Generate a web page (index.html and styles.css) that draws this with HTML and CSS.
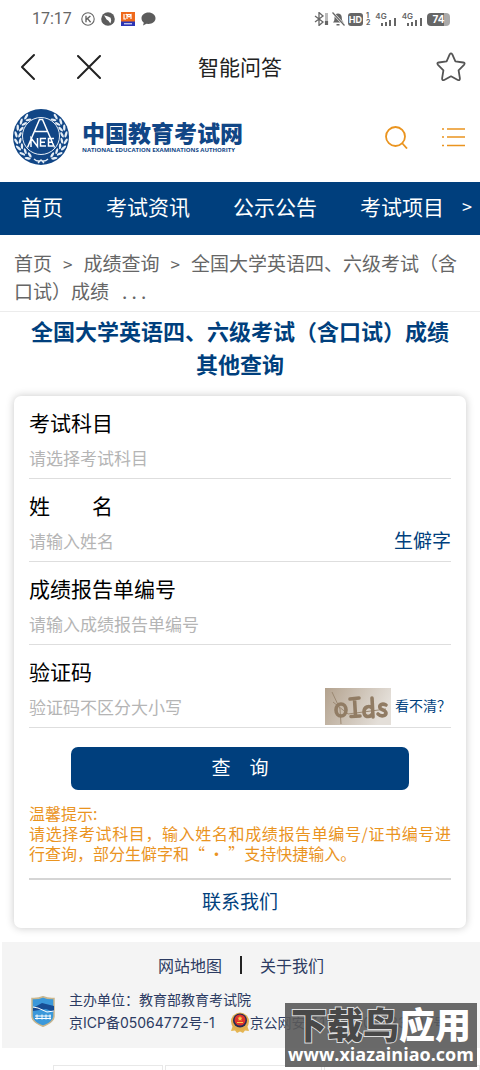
FILE: index.html
```html
<!DOCTYPE html>
<html lang="zh-CN">
<head>
<meta charset="utf-8">
<meta name="viewport" content="width=device-width, initial-scale=1">
<title>智能问答</title>
<link rel="stylesheet" href="styles.css">
</head>
<body>
<div class="status">
  <span class="clock">17:17</span>
  <svg width="14" height="14" viewBox="0 0 14 14" fill="none" stroke="#666" stroke-width="1.1"><circle cx="7" cy="7" r="6.2"/><path d="M5 3.8v6.4M9.4 4 5.4 7.4M6.6 6.6l3 3.6" stroke-width="1.4"/></svg>
  <svg width="14" height="14" viewBox="0 0 14 14"><circle cx="7" cy="7" r="6.8" fill="#5c5c5c"/><path d="M3 3.2 7 4.6l2.6 1.2.6 2.6-.8 3-2-2.6-1.8-1.2Z" fill="#fff"/></svg>
  <svg width="14" height="14" viewBox="0 0 14 14"><path fill="#ef6a1c" d="M0 0h14v10H0z"/><path fill="#2c35b5" d="M0 9.5h14V14H0z"/><path d="M3 2v5h2M6 7V3l2 2 2-2v4M4.500 2.500h6" fill="none" stroke="#fff" stroke-width="1.2"/><path d="M3 11.800h8" stroke="#fff"/></svg>
  <svg width="15" height="14" viewBox="0 0 15 14"><path d="M7.500.5c4 0 7 2.500 7 5.800s-3 5.700-7 5.700l-2-.2L2 13.500l.8-2.700C1.300 9.700.5 8.200.5 6.300.5 3 3.500.5 7.500.5Z" fill="#5c5c5c"/></svg>
  <div class="status-right">
    <svg width="15" height="14" viewBox="0 0 15 14" fill="none" stroke="#666" stroke-width="1.3"><path d="m1 4 8 6-4 3.500V.500L9 4l-8 6"/><path d="M12.500 1v8" stroke="#bbb" stroke-width="3"/><path d="M12.500 9v4" stroke-width="3.200"/></svg>
    <svg width="13" height="14" viewBox="0 0 13 14"><path d="M1 10.500c1.500-1.500 1.500-3 1.500-5C2.500 3 4 1.500 6 1.500S9.800 3 9.800 5.500c0 2 .3 3.500 2 5ZM4.500 12h3v1.500h-3Z" fill="#666"/><path d="m.5.5 12 13" stroke="#fff" stroke-width="2.400"/><path d="m.5.5 12 13" stroke="#666" stroke-width="1.200"/></svg>
    <span class="hd">HD</span><span class="sim"><span>1</span><span>2</span></span>
    <span class="net">4G</span>
    <svg class="bars" width="16" height="8" viewBox="0 0 16 8" fill="#666"><path d="M0 5h2v3H0zM4 4h2v4H4zM8 2h2v6H8zM13 0h2v8h-2z"/></svg>
    <span class="net">4G</span>
    <svg class="bars" width="16" height="8" viewBox="0 0 16 8" fill="#666"><path d="M0 5h2v3H0zM4 4h2v4H4zM8 2h2v6H8zM13 0h2v8h-2z"/></svg>
    <span class="battery">74</span>
  </div>
</div>

<header class="titlebar">
  <div class="side">
    <button class="icon-btn" aria-label="返回"><svg width="17" height="28" viewBox="0 0 17 28" fill="none" stroke="#222" stroke-width="2" stroke-linecap="round" stroke-linejoin="round"><path d="M14 2 2 14l12 12"/></svg></button>
    <button class="icon-btn" aria-label="关闭"><svg width="24" height="24" viewBox="0 0 24 24" fill="none" stroke="#222" stroke-width="2" stroke-linecap="round"><path d="m1 1 22 22M23 1 1 23"/></svg></button>
  </div>
  <h1>智能问答</h1>
  <div class="side end">
    <button class="icon-btn" aria-label="收藏"><svg width="30" height="30" viewBox="0 0 30 30" fill="none" stroke="#555" stroke-width="1.800" stroke-linejoin="round"><path d="M13.800 2.200Q15 .5 16.200 2.200L19.400 9.300 27.300 10.500Q29.600 11 28 12.800L22.600 18.300 23.900 26.400Q24 28.800 21.800 28L15 24.300 8.200 28Q6 28.800 6.100 26.400L7.400 18.300 2 12.800Q.4 11 2.700 10.500L10.600 9.300Z"/></svg></button>
  </div>
</header>

<div class="brand">
  <a class="logo" href="#">
    <svg width="56" height="56" viewBox="0 0 56 56" fill="none">
      <defs>
        <g id="leaf" fill="#e6eef6"><ellipse cx="28" cy="2.900" rx="3.200" ry="1.200" transform="rotate(22 28 2.900)"/><ellipse cx="28" cy="6.800" rx="3" ry="1.200" transform="rotate(-24 28 6.800)"/></g>
        <g id="branch"><use href="#leaf" transform="rotate(36 28 28)"/><use href="#leaf" transform="rotate(52 28 28)"/><use href="#leaf" transform="rotate(68 28 28)"/><use href="#leaf" transform="rotate(84 28 28)"/><use href="#leaf" transform="rotate(100 28 28)"/><use href="#leaf" transform="rotate(116 28 28)"/><use href="#leaf" transform="rotate(132 28 28)"/><use href="#leaf" transform="rotate(148 28 28)"/></g>
      </defs>
      <circle cx="28" cy="28" r="28" fill="#114686"/>
      <use href="#branch"/>
      <use href="#branch" transform="matrix(-1 0 0 1 56 0)"/>
      <circle cx="28" cy="27" r="18.500" stroke="#e6eef6"/>
      <path d="M14.500 38.500 26.500 10.500h3L41.500 38.500M22 22.500h12M18 38V29l6.500 8.500V29M33 29.500h-5.500V37H33M27.500 33.200H32M41 29.500h-5.500V37H40M35.500 33.200H40" stroke="#fff" stroke-width="1.500"/>
      <path d="M21 50q4 3.500 7 1 3 2.500 7-1M25 54l3-3 3 3" stroke="#e6eef6" stroke-width="1.400"/>
    </svg>
    <span class="logo-text"><strong>中国教育考试网</strong><small>NATIONAL EDUCATION EXAMINATIONS AUTHORITY</small></span>
  </a>
  <div class="tools">
    <button class="icon-btn" aria-label="搜索"><svg width="23" height="23" viewBox="0 0 23 23" fill="none" stroke="#ea941f" stroke-width="1.800"><circle cx="10.500" cy="10.500" r="9.500"/><path d="m17 17 5 5.500"/></svg></button>
    <button class="icon-btn" aria-label="菜单"><svg width="23" height="20" viewBox="0 0 23 20" stroke="#ea941f" stroke-width="1.500"><path d="M0 2h2M5 2h18M0 10h2M5 10h18M0 18.500h2M5 18.500h18"/></svg></button>
  </div>
</div>

<nav class="nav">
  <a href="#">首页</a><a href="#">考试资讯</a><a href="#">公示公告</a><a href="#">考试项目</a>
  <button class="more" aria-label="更多">&gt;</button>
</nav>

<div class="crumbs"><a href="#">首页</a><span class="sep">&gt;</span><a href="#">成绩查询</a><span class="sep">&gt;</span><span>全国大学英语四、六级考试（含口试）成绩</span><span class="dots">. . .</span></div>

<main>
  <h2>全国大学英语四、六级考试（含口试）成绩<br>其他查询</h2>
  <form class="card">
    <div class="field"><label for="subject">考试科目</label><div class="row"><input id="subject" type="text" placeholder="请选择考试科目"></div></div>
    <div class="field"><label for="name">姓&emsp;&emsp;名</label><div class="row"><input id="name" type="text" placeholder="请输入姓名"><a class="rare" href="#">生僻字</a></div></div>
    <div class="field"><label for="report">成绩报告单编号</label><div class="row"><input id="report" type="text" placeholder="请输入成绩报告单编号"></div></div>
    <div class="field"><label for="code">验证码</label><div class="row"><input id="code" type="text" placeholder="验证码不区分大小写">
      <svg class="captcha" width="66" height="37" viewBox="0 0 66 37" role="img" aria-label="验证码图片"><defs><linearGradient id="cap" x2="1" y2=".3"><stop stop-color="#b3a28e"/><stop offset="1" stop-color="#e4dfd9"/></linearGradient></defs><path fill="url(#cap)" d="M0 0h66v37H0z"/><path d="m7 4 8 17 1 15M8 14l15 12 38-5" fill="none" stroke="#9c8973"/><g fill="none" stroke="#917c64" stroke-width="3.600" stroke-linecap="round" stroke-linejoin="round"><ellipse cx="16" cy="22" rx="5" ry="6"/><path d="m25 11 9-1M29.500 11l1 17M26 28.500l9-.5M47 10l1 19M47 20c-3-3-8-1-8 4s5 6 8.500 2M61 17c-4-2-7 0-6 3 1 2 6 2 6 5s-5 4-8 1"/></g></svg>
      <a class="refresh" href="#">看不清？</a></div></div>
    <button class="submit" type="button">查&emsp;询</button>
    <p class="hint">温馨提示:<br>请选择考试科目，输入姓名和成绩报告单编号/证书编号进行查询，部分生僻字和“ · ”支持快捷输入。</p>
    <a class="contact" href="#">联系我们</a>
  </form>
</main>

<footer class="footer">
  <div class="links"><a href="#">网站地图</a><a href="#">关于我们</a></div>
  <div class="legal">
    <svg width="26" height="31" viewBox="0 0 26 31"><path d="M2 2.500Q8 3 13 .8q5 2.200 11 1.700V20c0 5-5 7.500-11 10.300C7 27.500 2 25 2 20Z" fill="#3b98da" stroke="#c9b68d" stroke-width="1.500"/><path d="m3 12 9-5 12 3v6l-8-3-13 2Z" fill="#174d94"/><path d="m3 11 5 1 9 4 7-1" fill="none" stroke="#fff"/><path d="M5 20h16M5 22.500h16M7 18.500v5M12 18.500v5M16 18.500v5M20 18.500v5" stroke="#fff" stroke-width="1"/></svg>
    <div class="lines">
      <div>主办单位：教育部教育考试院</div>
      <div class="icp"><a href="#">京ICP备05064772号-1</a>
        <svg width="20" height="22" viewBox="0 0 20 22"><path d="M3 13 1 19l4-.5L7 21l3-1.500 3 1.500 2-2.500 4 .5-2-6Z" fill="#e5b552"/><circle cx="10" cy="9.500" r="9" fill="#e0ae50"/><circle cx="10" cy="8.500" r="7" fill="#252a54"/><circle cx="10" cy="8" r="5.500" fill="#e0342b"/><path d="m10 4 .8 1.600 1.700.2-1.300 1.200.4 1.800-1.600-.9-1.600.9.4-1.800-1.300-1.200 1.700-.2ZM7 10h6v1H7z" fill="#f6cf4c"/></svg><a href="#">京公网安备11010802033000号</a></div>
    </div>
  </div>
</footer>
<div class="tabs"><span></span><span></span><span></span></div>
<div class="watermark"><div class="wm-name"><span>下载鸟</span>应用</div><div class="wm-url">www.xiazainiao.com</div></div>
</body>
</html>
```
FILE: styles.css
```css
* { box-sizing: border-box; }
body {
  margin: 0;
  position: relative;
  background: #fff;
  color: #000;
  font-family: "Noto Sans CJK SC", "Noto Sans", sans-serif;
  overflow-x: hidden;
}
a { color: inherit; text-decoration: none; }
button { font-family: inherit; border: 0; padding: 0; background: none; }
.icon-btn { display: flex; }

.status { display: flex; align-items: center; gap: 6px; height: 38px; padding: 0 30px 0 32px; color: #666; }
.clock { font: 16px/38px Roboto, sans-serif; margin-right: 3px; }
.status-right { display: flex; align-items: center; gap: 3px; margin-left: auto; font-family: Inter, sans-serif; }
.hd { background: #666; color: #fff; font-size: 9px; line-height: 13px; font-weight: 700; border-radius: 3px; padding: 0 1px; }
.sim { display: flex; flex-direction: column; font-size: 7px; line-height: 7px; font-weight: 700; }
.net { align-self: flex-start; font-size: 8px; line-height: 8px; font-weight: 600; margin-left: 2px; }
.bars { align-self: flex-end; margin-left: -9px; }
.battery { width: 23px; border-radius: 4px; background: linear-gradient(90deg, #666 74%, #aaa 74%); color: #fff; font-size: 10px; line-height: 13px; font-weight: 700; text-align: center; margin-left: 1px; }

.titlebar { display: flex; align-items: center; height: 58px; padding: 0 14px 0 20px; }
.side { flex: 1; display: flex; align-items: center; gap: 40px; }
.end { justify-content: flex-end; }
.titlebar h1 { margin: 0; padding: 0 6px 3px 0; font-size: 21px; line-height: 30px; font-weight: 400; color: #222; }

.brand { display: flex; align-items: center; justify-content: space-between; height: 86px; padding: 0 15px 4px 13px; }
.logo { display: flex; align-items: center; gap: 13px; color: #114686; }
.logo-text { display: flex; flex-direction: column; white-space: nowrap; }
.logo-text strong { font-size: 23px; line-height: 26px; font-weight: 900; }
.logo-text small { font: 700 6px/10px "Open Sans", sans-serif; }
.tools { display: flex; align-items: center; gap: 34px; }

.nav { display: flex; align-items: center; gap: 43px; height: 53px; padding: 0 7px 5px 21px; background: #003f7d; color: #fff; font-size: 21px; line-height: 30px; white-space: nowrap; }
.nav .more { margin-left: -25px; color: #fff; font-size: 18px; line-height: 30px; }

.crumbs { padding: 14px 14px 7px; border-bottom: 1px solid #ececec; color: #666; font-size: 19px; line-height: 27px; }
.sep { margin: 0 11px; font-size: 17px; }
.dots { margin-left: 13px; }

main { padding: 2px 14px 0; }
h2 { margin: 0 -10px 16px; text-align: center; color: #003f7d; font-size: 22px; line-height: 33px; font-weight: 700; }
.card { padding: 0 15px 6px; border-radius: 7px; background: #fff; box-shadow: 0 0 8px rgba(0, 0, 0, .22); }
.field { padding-top: 11px; border-bottom: 1px solid #dedede; }
.field label { display: block; font-size: 21px; line-height: 30px; }
.row { display: flex; align-items: center; height: 41px; }
.row input { flex: 1; min-width: 0; height: 36px; padding: 0; border: 0; outline: 0; background: none; font: 17px/24px "Noto Sans CJK SC", sans-serif; }
.row input::placeholder { color: #b5b5b5; opacity: 1; }
.rare { padding-bottom: 3px; color: #003f7d; font-size: 19px; }
.refresh { margin-left: 4px; padding-bottom: 3px; color: #003f7d; font-size: 14px; }
.submit { display: block; width: 80%; height: 43px; margin: 19px auto 13px; padding-bottom: 5px; border-radius: 7px; background: #003f7d; color: #fff; font-size: 19px; }
.hint { margin: 0 0 15px; color: #ea941f; font-size: 16px; line-height: 20px; text-align: justify; }
.contact { display: block; border-top: 2px solid #d5d5d5; text-align: center; color: #003f7d; font-size: 19px; line-height: 42px; }

.footer { margin: 14px 0 0 2px; padding: 11px 28px 14px; background: #f4f4f4; color: #2c3b62; }
.links { display: flex; justify-content: center; font-size: 16px; line-height: 24px; }
.links a { padding: 0 18px; }
.links a + a { border-left: 2px solid #222; line-height: 18px; height: 18px; align-self: center; }
.legal { display: flex; align-items: center; gap: 13px; margin-top: 11px; }
.lines { font-family: Inter, "Noto Sans CJK SC", sans-serif; font-size: 14px; line-height: 23px; white-space: nowrap; }
.icp { display: flex; align-items: center; }
.icp svg { margin-left: 15px; }

.tabs { display: grid; grid-template-columns: 110px 1fr 1fr; gap: 2px; height: 5px; margin: 17px 0 0 53px; overflow: hidden; }
.tabs span { border: 1px solid #e8e8e8; border-bottom: 0; }

.watermark { position: absolute; right: 3px; top: 1003px; width: 192px; height: 64px; background: rgba(90, 90, 90, .9); color: #fff; text-align: center; white-space: nowrap; }
.wm-name { font-size: 36px; line-height: 40px; font-weight: 900; }
.wm-name span { color: #484848; -webkit-text-stroke: 2px #ddd; paint-order: stroke fill; }
.wm-url { font: 700 18px/22px "Open Sans", sans-serif; }
```
